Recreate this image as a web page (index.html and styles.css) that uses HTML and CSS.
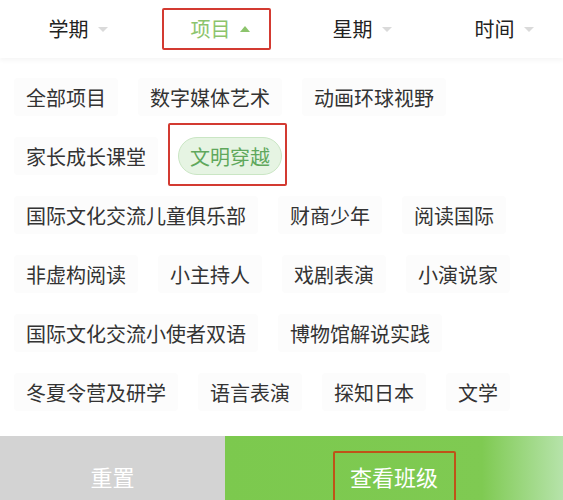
FILE: index.html
```html
<!DOCTYPE html>
<html lang="zh-CN">
<head>
    <meta charset="UTF-8">
    <meta name="viewport" content="width=device-width, initial-scale=1.0">
    <title>项目筛选</title>

    <link rel="stylesheet" href="styles.css">
</head>
<body>
    <div class="page">
        <div class="tabs">
            <div class="tab"><span class="tab-label">学期</span><span class="caret"></span></div>
            <div class="tab tab-active">
                <span class="mark mark-tab"><span class="tab-label">项目</span><span class="caret caret-up"></span></span>
            </div>
            <div class="tab"><span class="tab-label">星期</span><span class="caret"></span></div>
            <div class="tab"><span class="tab-label">时间</span><span class="caret"></span></div>
        </div>

        <div class="options">
            <div class="row">
                <span class="chip">全部项目</span>
                <span class="chip">数字媒体艺术</span>
                <span class="chip">动画环球视野</span>
            </div>
            <div class="row">
                <span class="chip">家长成长课堂</span>
                <span class="chip chip-selected mark mark-chip">文明穿越</span>
            </div>
            <div class="row">
                <span class="chip">国际文化交流儿童俱乐部</span>
                <span class="chip">财商少年</span>
                <span class="chip">阅读国际</span>
            </div>
            <div class="row">
                <span class="chip">非虚构阅读</span>
                <span class="chip">小主持人</span>
                <span class="chip">戏剧表演</span>
                <span class="chip">小演说家</span>
            </div>
            <div class="row">
                <span class="chip">国际文化交流小使者双语</span>
                <span class="chip">博物馆解说实践</span>
            </div>
            <div class="row">
                <span class="chip">冬夏令营及研学</span>
                <span class="chip">语言表演</span>
                <span class="chip">探知日本</span>
                <span class="chip">文学</span>
            </div>
        </div>

        <div class="actions">
            <button class="btn btn-reset">重置</button>
            <button class="btn btn-submit"><span class="mark mark-btn">查看班级</span></button>
        </div>
    </div>
</body>
</html>
```

FILE: styles.css
```css
body {
    margin: 0;
    background-color: white;
    font-family: "Noto Sans CJK SC", "Noto Sans", sans-serif;
    color: #333;
    overflow: hidden;
}

.page {
    width: 563px;
    height: 500px;
    display: flex;
    flex-direction: column;
    overflow: hidden;
}

/* top filter tabs */
.tabs {
    height: 58px;
    padding-left: 7px;
    display: grid;
    grid-template-columns: repeat(4, 142px);
    align-items: center;
    box-shadow: 0 3px 4px rgba(0, 0, 0, 0.035);
    position: relative;
    z-index: 1;
}

.tab {
    display: flex;
    justify-content: center;
    align-items: center;
    font-size: 20px;
    line-height: 28px;
    color: #222;
}

.tab-label {
    display: inline-block;
}

.caret {
    width: 0;
    height: 0;
    margin-left: 9px;
    border-left: 5px solid transparent;
    border-right: 5px solid transparent;
    border-top: 5px solid #dadada;
}

.tab-active {
    color: #8cc46c;
}

.tab-active .mark-tab {
    display: inline-flex;
    align-items: center;
}

.caret-up {
    border-top: none;
    border-bottom: 6px solid #8cc46c;
}

/* option chips */
.options {
    padding: 20px 14px 25px;
    display: flex;
    flex-direction: column;
    gap: 21px;
}

.row {
    display: flex;
    gap: 20px;
}

.chip {
    height: 38px;
    padding: 0 12px;
    display: inline-flex;
    align-items: center;
    font-size: 20px;
    color: #333;
    background-color: #fcfcfc;
    border-radius: 4px;
    white-space: nowrap;
}

.chip-selected {
    height: 36px;
    padding: 0 11px;
    color: #5fa85c;
    background-color: #e6f4e3;
    border: 1px solid #cae6c4;
    border-radius: 20px;
}

/* bottom buttons */
.actions {
    height: 64px;
    display: flex;
}

.btn {
    border: none;
    margin: 0;
    padding: 25px 0 0;
    display: flex;
    justify-content: center;
    align-items: flex-start;
    font-family: "Noto Sans CJK SC", "Noto Sans", sans-serif;
    font-size: 22px;
    line-height: 30px;
    color: white;
    cursor: pointer;
}

.btn-reset {
    width: 225px;
    background-color: #d3d3d3;
}

.btn-submit {
    flex: 1;
    background: linear-gradient(to right, #7cc94e 0%, #7fca52 76%, #b6e3aa 100%);
}

/* red annotation frames drawn over the screenshot */
.mark {
    position: relative;
}

.mark::after {
    content: "";
    position: absolute;
    border: 2px solid #d33a31;
    border-radius: 2px;
    pointer-events: none;
}

.mark-tab::after {
    top: -7px;
    bottom: -7px;
    left: -29px;
    right: -21px;
}

.mark-chip::after {
    top: -15px;
    bottom: -12px;
    left: -11px;
    right: -6px;
}

.mark-btn::after {
    top: -10px;
    bottom: -14px;
    left: -17px;
    right: -18px;
    border-color: #bf5318;
}
```
